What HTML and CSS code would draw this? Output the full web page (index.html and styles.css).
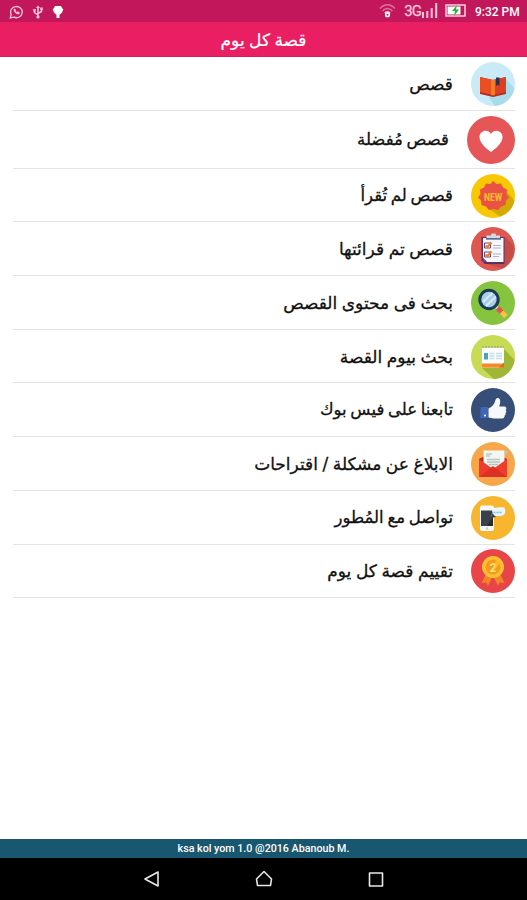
FILE: index.html
```
<!DOCTYPE html>
<html lang="ar">
<head>
    <meta charset="UTF-8">
    <meta name="viewport" content="width=device-width, initial-scale=1.0">
    <title>قصة كل يوم</title>
    <link rel="stylesheet" href="styles.css">
</head>
<body>
    <div class="status-bar">
        <div class="status-left">
            <svg width="15" height="14" viewBox="0 0 15 14" fill="none" stroke="#fbc5dc" stroke-width="1.3">
                <path d="M1.2 13l1-3.4A5.8 5.6 0 1 1 5 12.2z"/>
                <path d="M5 3.8c-.5 3 2 5.4 5 5.2l.4-1.6-1.7-.6-.8.7L6.3 6l.5-1z" fill="#fbc5dc" stroke-width=".6"/>
            </svg>
            <svg width="10" height="14" viewBox="0 0 10 14" fill="none" stroke="#fbc5dc" stroke-width="1.5">
                <path d="M5 2v10M5 10L1.5 7.5V5M5 8.5l3.5-2V3.5"/>
                <path d="M3 3l2-2.5L7 3z" fill="#fbc5dc" stroke="none"/>
                <circle cx="5" cy="12" r="1.6" fill="#fbc5dc" stroke="none"/>
                <path d="M.3 4h2.4v2.4H.3zM7.3 2.5h2.4v2.4H7.3z" fill="#fbc5dc" stroke="none"/>
            </svg>
            <svg width="12" height="14" viewBox="0 0 12 14" fill="#fff">
                <path d="M3 1h6l1 2 1.3 1.5L10 7.500 8 9.500H7.500V13h-3V9.500H4L2 7.500.7 4.500 2 3z"/>
            </svg>
        </div>
        <div class="status-right">
            <svg class="wifi" width="17" height="15" viewBox="0 0 17 15" fill="none" stroke="#e070a0" stroke-width="1.3">
                <path d="M1 5.500c4.500-5 10.500-5 15 0M3.500 8c3-3.300 7-3.300 10 0"/>
                <path d="M5.700 10c1.700-1.800 3.900-1.800 5.600 0" stroke="#f8c4da"/>
                <circle cx="8.500" cy="11.700" r="1.800" stroke="#fff" stroke-width="1.6"/>
            </svg>
            <span class="network">3G</span>
            <svg class="signal" width="17" height="17" viewBox="0 0 17 17" fill="#fbc5dc">
                <path d="M1 10h2v6H1zM5.300 9h2v7h-2zM9.700 6h2v10h-2zM14.200 1h2v15h-2z"/>
            </svg>
            <svg class="battery" width="21" height="13" viewBox="0 0 21 13">
                <path d="M1 1h19v11H1z" fill="none" stroke="#fbd0e0" stroke-width="1.5"/>
                <path d="M2.500 2.500h13v8h-13z" fill="#fff"/>
                <path d="M12 1L7 7h3l-1 5 5-6.500h-3z" fill="#1fb53a"/>
            </svg>
            <span class="clock">9:32 PM</span>
        </div>
    </div>

    <div class="title-bar" dir="rtl"><h1>قصة كل يوم</h1></div>

    <ul class="menu" dir="rtl">
        <li class="menu-item">
            <svg class="icon" viewBox="0 0 44 44">
                <circle cx="22" cy="22" r="22" fill="#c9ebf8"/>
                <path d="M35 17l8.500 9.500A22 22 0 0 1 24 44l-6-8 4-4z" fill="#a9dbea"/>
                <path d="M9 15l13 3 13-3v17l-13 3-13-3z" fill="#b52e21"/>
                <path d="M9 15l13 3v15L9 30z" fill="#ea4f22"/>
                <path d="M22 18l13-3v15l-13 3z" fill="#dd3f21"/>
                <path d="M20 17.500l2 .5 2-.5V33l-2 .5-2-.5z" fill="#f47c22"/>
                <path d="M25 15.500h3.500V24l-1.700-1.500L25 24z" fill="#29305a"/>
            </svg>
            <span class="label">قصص</span>
        </li>
        <li class="menu-item favorite">
            <svg class="icon" viewBox="0 0 48 48">
                <circle cx="24" cy="24" r="24" fill="#e65558"/>
                <path d="M24 36C20 33 12.500 27.500 12.500 21c0-6.500 8.500-8.500 11.500-3 3-5.500 11.500-3.500 11.500 3C35.500 27.500 28 33 24 36z" fill="#fff"/>
            </svg>
            <span class="label tight">قصص مُفضلة</span>
        </li>
        <li class="menu-item">
            <svg class="icon" viewBox="0 0 44 44">
                <circle cx="22" cy="22" r="22" fill="#f7c803"/>
                <path d="M35 17l8.500 9.500A22 22 0 0 1 29 42.500L18 35z" fill="#d4a904"/>
                <path d="M22 7l3.500 3 4.500-.5 2 4 4 2-.5 4.500 2.500 3.500-3 3-.5 4.500-4.500 1.500-3 3.500-4.500-1-4.500 1-3-3.500-4.500-1.500-.5-4.500-3-3L9.500 20 9 15.500l4-2 2-4 4.500.5z" fill="#ea5344"/>
                <text x="22" y="26.500" class="new-text" text-anchor="middle" textLength="18" lengthAdjust="spacingAndGlyphs">NEW</text>
            </svg>
            <span class="label tight">قصص لم تُقرأ</span>
        </li>
        <li class="menu-item">
            <svg class="icon" viewBox="0 0 44 44">
                <circle cx="22" cy="22" r="22" fill="#de5751"/>
                <path d="M34 10l8 8a22 22 0 0 1-10 23.500L12 36z" fill="#c44c48"/>
                <path d="M10.500 10h23v27H14l-3.500-3.500z" fill="#5b315f"/>
                <path d="M12 11h20.500v24H16l-4-4z" fill="#f6f8fc"/>
                <path d="M15.500 11V8.500H20l.5-2h4l.5 2h4V11z" fill="#d5d9e3"/>
                <path d="M15 11h15v1.700H15z" fill="#536f9a"/>
                <path d="M13.500 16h6v5h-6zM13.500 25h6v5h-6z" fill="#fff" stroke="#68466b"/>
                <path d="M14.500 18.500l2 1.500 4-4.500M14.500 27.500l2 1.500 4-4.500" fill="none" stroke="#eb782f" stroke-width="2"/>
                <path d="M22 18.500h8M22 21h8M22 27h8M22 29.500h6" stroke="#aab5cc"/>
                <path d="M12 31l4 4h-5z" fill="#783d85"/>
            </svg>
            <span class="label">قصص تم قرائتها</span>
        </li>
        <li class="menu-item">
            <svg class="icon" viewBox="0 0 44 44">
                <circle cx="22" cy="22" r="22" fill="#86c440"/>
                <path d="M24.500 25l4 4" stroke="#d9dde0" stroke-width="3"/>
                <path d="M26.500 27l6 6" stroke="#e5534b" stroke-width="5"/>
                <path d="M30.500 31l4.500 4.500" stroke="#f6c244" stroke-width="5"/>
                <circle cx="18" cy="18.500" r="9.200" fill="#a9cde5" stroke="#1b3a55" stroke-width="3"/>
                <path d="M12 21l9.500-9M15 25l10-9.500" stroke="#d6e9f4" stroke-width="2.2"/>
            </svg>
            <span class="label">بحث فى محتوى القصص</span>
        </li>
        <li class="menu-item">
            <svg class="icon" viewBox="0 0 44 44">
                <circle cx="22" cy="22" r="22" fill="#c7db55"/>
                <path d="M33 14l10.500 11A22 22 0 0 1 23 44L11 33z" fill="#9fb637"/>
                <path d="M11 13h22v19.500H11z" fill="#fbfdfd"/>
                <path d="M11 11.800h22" stroke="#a7afa0" stroke-width="1.5" stroke-dasharray="2 1"/>
                <path d="M11 28.500h22v4H11z" fill="#f58a26"/>
                <path d="M28 32.500l5-5v5z" fill="#e36621"/>
                <path d="M13 18h4v6.500h-4z" fill="#46a3c3"/>
                <path d="M18.500 18.500h5M18.500 21h5M18.500 23.500h5M25 18.500h6M25 21h6M25 23.500h6" stroke="#c4e0e8" stroke-width="1.3"/>
            </svg>
            <span class="label">بحث بيوم القصة</span>
        </li>
        <li class="menu-item">
            <svg class="icon" viewBox="0 0 44 44">
                <circle cx="22" cy="22" r="22" fill="#374e78"/>
                <path d="M9.500 19h7.500v11H9.500z" fill="#3e66ba"/>
                <circle cx="14" cy="27.500" r="1" fill="#fff"/>
                <path d="M17.500 20.500c4-1.500 6-4.500 6.800-8 .4-2 2-2.800 3.300-2.300 2.400 1 1.800 4.800.6 8.300h5.300c2 0 2.500 2.300 1.200 3.400 1 .9.800 2.400-.3 3 .6 1 .2 2.300-.9 2.700.3 1.500-.5 2.900-2.500 2.900h-8c-2 0-3.500-.8-5.500-1z" fill="#f6f8fb"/>
            </svg>
            <span class="label tight">تابعنا على فيس بوك</span>
        </li>
        <li class="menu-item">
            <svg class="icon" viewBox="0 0 44 44">
                <circle cx="22" cy="22" r="22" fill="#f7a64a"/>
                <path d="M8 17l4-2h20l4 2v18H8z" fill="#b9251f"/>
                <path d="M12.500 8.500h21V29h-21z" fill="#f4f6f4"/>
                <path d="M33.500 8.500h2.500v4l-2.500-1z" fill="#bdc4bd"/>
                <path d="M15 12h6M15 14h4" stroke="#a8b2ae" stroke-width="1.2"/>
                <path d="M16 17.500h13M16 20h13M18 22.500h9" stroke="#b5c5bf" stroke-width="1.5"/>
                <path d="M8 17l14 10 14-10v18H8z" fill="#ef3d2d"/>
                <path d="M8 35l14-11 14 11z" fill="#dc2f25"/>
            </svg>
            <span class="label">الابلاغ عن مشكلة / اقتراحات</span>
        </li>
        <li class="menu-item">
            <svg class="icon" viewBox="0 0 44 44">
                <circle cx="22" cy="22" r="22" fill="#f7b62e"/>
                <rect x="9" y="9.500" width="14" height="25.500" rx="2" fill="#f7f8f9"/>
                <path d="M10 14.500h12V30H10z" fill="#3a414b"/>
                <path d="M16 30l6-9v9z" fill="#252b33"/>
                <circle cx="16" cy="32.500" r="1.200" fill="#c9cdd1"/>
                <path d="M20 20.500l1.500-4c-2-5 3.500-6 12-5 1.500 4 1 8-3 8.500h-5z" fill="#e9f5f8"/>
                <path d="M20 22l1-5 4 4z" fill="#3a414b"/>
                <path d="M22.500 16.500h9" stroke="#75c4e0" stroke-width="1.7" stroke-dasharray="2 1"/>
            </svg>
            <span class="label tight">تواصل مع المُطور</span>
        </li>
        <li class="menu-item">
            <svg class="icon" viewBox="0 0 44 44">
                <circle cx="22" cy="22" r="22" fill="#e84549"/>
                <path d="M15 25l-4.500 9 4.500-.5 2 3L22 27l5 9.500 2-3 4.500.5-4.500-9z" fill="#f38327"/>
                <circle cx="22" cy="18" r="11" fill="#fbc02f"/>
                <circle cx="22" cy="18" r="7.500" fill="#f39a1f"/>
                <path d="M25 11l4 3-8 9.500z" fill="#fcb82e"/>
                <text x="22" y="22.500" class="medal-text" text-anchor="middle">2</text>
            </svg>
            <span class="label">تقييم قصة كل يوم</span>
        </li>
    </ul>

    <div class="footer">ksa kol yom 1.0 @2016 Abanoub M.</div>

    <div class="nav-bar">
        <svg width="18" height="18" viewBox="0 0 18 18"><path d="M15 2v14L2 9z"/></svg>
        <svg width="18" height="18" viewBox="0 0 18 18"><path d="M9 1.500l7.500 7.500-1 6.500h-13L1.500 9z"/></svg>
        <svg width="18" height="18" viewBox="0 0 18 18"><path d="M2.500 3h13v13h-13z"/></svg>
    </div>
</body>
</html>
```
FILE: styles.css
```
body {
    font-family: "DejaVu Sans", sans-serif;
    margin: 0;
    height: 900px;
    display: flex;
    flex-direction: column;
    background-color: #fff;
    overflow: hidden;
}

svg {
    display: block;
    flex: none;
}

.status-bar {
    display: flex;
    justify-content: space-between;
    height: 22px;
    padding: 0 6px 0 9px;
    box-sizing: border-box;
    background-color: #c2185b;
    color: #fff;
    font-family: Roboto, sans-serif;
}

.status-left {
    display: flex;
    gap: 9px;
    padding-top: 5px;
}

.status-right {
    display: flex;
    align-items: flex-start;
}

.wifi {
    margin: 3px 8px 0 0;
}

.network {
    font-size: 15px;
    line-height: 22px;
    letter-spacing: -1px;
    color: #fbc5dc;
    -webkit-text-stroke: 0.3px #fbc5dc;
}

.signal {
    margin-top: 2px;
}

.battery {
    margin: 4px 9px 0 7px;
}

.clock {
    font-size: 12px;
    line-height: 24px;
    font-weight: 500;
    width: 46px;
    white-space: nowrap;
}

.title-bar {
    height: 35px;
    box-sizing: border-box;
    border-bottom: 1px solid #d81b60;
    background-color: #e91e63;
    color: #fff;
    text-align: center;
}

.title-bar h1 {
    margin: 0;
    font-size: 17px;
    font-weight: normal;
    line-height: 36px;
    word-spacing: -1px;
    -webkit-text-stroke: 0.2px #fff;
}

.menu {
    flex: 1;
    list-style: none;
    margin: 0;
    padding: 0 12px 0 13px;
}

.menu-item {
    display: flex;
    align-items: center;
    gap: 18px;
    height: 53.7px;
    padding-top: 1px;
    box-sizing: border-box;
    border-bottom: 1px solid #e4e4e4;
}

.menu-item.favorite {
    height: 58px;
}

.icon {
    width: 44px;
    height: 44px;
}

.favorite .icon {
    width: 48px;
    height: 48px;
}

.label {
    font-size: 17px;
    line-height: 24px;
    color: #111;
    white-space: nowrap;
    word-spacing: -0.8px;
    -webkit-text-stroke: 0.3px #111;
}

.label.tight {
    font-size: 16.5px;
    word-spacing: -1.5px;
}

.new-text {
    font: bold 10px Roboto, sans-serif;
    fill: #fbc02d;
}

.medal-text {
    font: bold 12px Roboto, sans-serif;
    fill: #fde070;
}

.footer {
    height: 19px;
    box-sizing: border-box;
    padding-top: 1px;
    background-color: #19566f;
    color: #fff;
    font: 500 10.7px/18px Roboto, sans-serif;
    text-align: center;
}

.nav-bar {
    display: flex;
    justify-content: center;
    align-items: center;
    gap: 94px;
    height: 42px;
    background-color: #000;
}

.nav-bar path {
    fill: none;
    stroke: #e8e8e8;
    stroke-width: 1.6;
    stroke-linejoin: round;
}
```
